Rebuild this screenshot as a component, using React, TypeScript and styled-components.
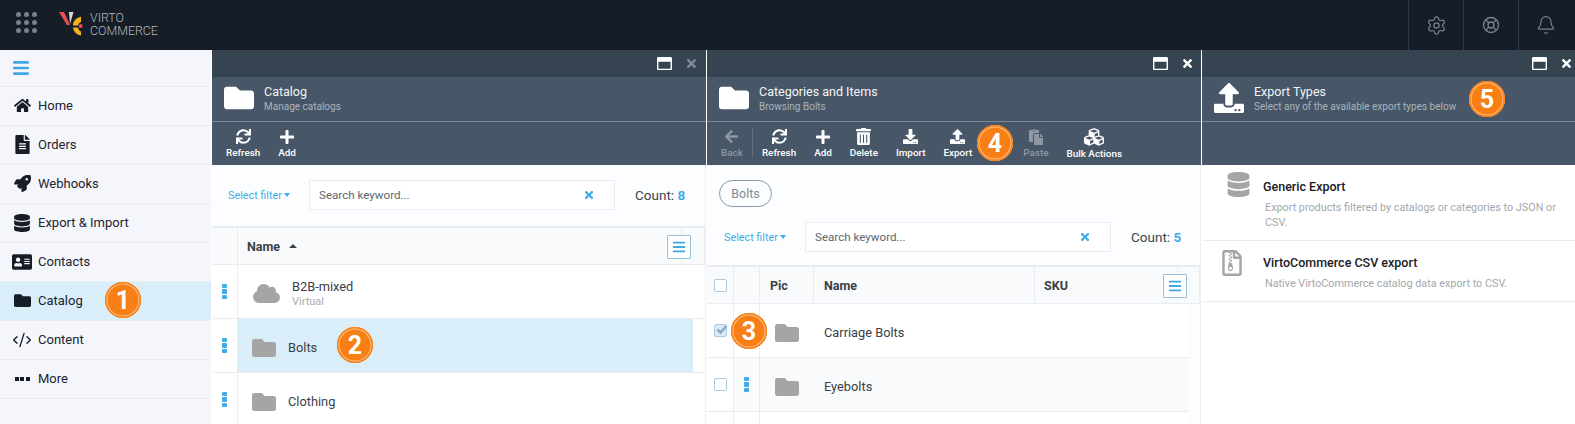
import React from 'react'
import styled, { createGlobalStyle } from 'styled-components'
import {
  FaAddressCard,
  FaArrowLeft,
  FaBars,
  FaCloud,
  FaCubes,
  FaDatabase,
  FaDownload,
  FaFileAlt,
  FaFolder,
  FaHome,
  FaPaste,
  FaPlus,
  FaRegFileArchive,
  FaRegWindowMaximize,
  FaRocket,
  FaSync,
  FaTimes,
  FaTrashAlt,
  FaUpload,
} from 'react-icons/fa'
import { Bell, CodeXml, LifeBuoy, Settings } from 'lucide-react'

const GlobalStyle = createGlobalStyle`
  html, body {
    margin: 0;
    padding: 0;
    background: #fff;
    overflow: hidden;
  }
  * {
    box-sizing: border-box;
  }
`

const Page = styled.div`
  position: relative;
  width: 1575px;
  height: 424px;
  overflow: hidden;
  font-family: Roboto, 'Liberation Sans', sans-serif;
  display: flex;
  flex-direction: column;
`

const TopBar = styled.header`
  height: 50px;
  flex: none;
  background: #161d27;
  display: flex;
  align-items: stretch;
  padding-right: 2px;
`

const Launcher = styled.div`
  width: 59px;
  padding: 12px 0 0 16px;
  display: grid;
  grid-template-columns: repeat(3, 5px);
  grid-auto-rows: 5px;
  gap: 3px;
`

const LauncherDot = styled.span`
  border-radius: 50%;
  background: #7b838d;
`

const Logo = styled.div`
  flex: 1;
  display: flex;
  align-items: center;
  gap: 7px;
  & svg {
    margin-top: -3px;
  }
`

const LogoText = styled.div`
  font-size: 12.4px;
  font-weight: 300;
  line-height: 12.5px;
  color: #b4b9bf;
  margin-top: -1px;
`

const TopAction = styled.div`
  width: 55px;
  border-left: 1px solid #2d3a4b;
  display: flex;
  align-items: center;
  justify-content: center;
  color: #76828f;
`

const Body = styled.div`
  flex: 1;
  display: flex;
  min-height: 0;
`

const Sidebar = styled.nav`
  width: 211px;
  flex: none;
  background: #f4f6fb;
`

const MenuToggle = styled.div`
  height: 37px;
  padding-left: 12px;
  display: flex;
  align-items: center;
  color: #3ea8e2;
  border-bottom: 1px solid #e9ecf2;
`

const NavItem = styled.div<{ $active?: boolean }>`
  height: 39px;
  padding: 0 0 1px 12px;
  display: flex;
  align-items: center;
  gap: 6px;
  font-size: 13px;
  color: #1b2430;
  background: ${({ $active }) => ($active ? '#d9eef9' : 'transparent')};
  border-bottom: 1px solid #e9ecf2;
`

const NavIcon = styled.span`
  width: 20px;
  display: flex;
  justify-content: center;
  color: #161d27;
`

const MoreDots = styled.span`
  display: flex;
  gap: 1.5px;
  & i {
    width: 4px;
    height: 4px;
    background: #161d27;
  }
`

const Blade = styled.section<{ $width: number }>`
  position: relative;
  width: ${({ $width }) => $width}px;
  flex: none;
  border-left: 1px solid #fff;
  background: #fff;
  display: flex;
  flex-direction: column;
`

const BladeTop = styled.div<{ $right: number }>`
  height: 27px;
  background: #364452;
  display: flex;
  align-items: center;
  justify-content: flex-end;
  gap: 13px;
  padding-right: ${({ $right }) => $right}px;
`

const WindowIcon = styled.span<{ $muted?: boolean }>`
  display: flex;
  color: ${({ $muted }) => ($muted ? '#7f8b97' : '#fff')};
`

const BladeHead = styled.div`
  height: 45px;
  background: #475768;
  border-bottom: 1px solid #7d8a97;
  padding: 0 0 2px 12px;
  display: flex;
  align-items: center;
  gap: 10px;
`

const HeadIcon = styled.span`
  display: flex;
  width: 30px;
  justify-content: center;
  color: #fff;
`

const HeadTitle = styled.div`
  font-size: 12.5px;
  line-height: 16px;
  color: #f3f5f7;
`

const HeadSub = styled.div`
  font-size: 10px;
  line-height: 13px;
  color: #aab3bc;
`

const Toolbar = styled.div`
  height: 43px;
  background: #475768;
  padding: 0 0 0 14px;
  display: flex;
  align-items: flex-start;
  gap: 18px;
`

const ToolButton = styled.div<{ $disabled?: boolean }>`
  display: flex;
  flex-direction: column;
  align-items: center;
  padding-top: 6px;
  height: 37px;
  font-size: 9.9px;
  font-weight: 500;
  line-height: 13px;
  color: ${({ $disabled }) => ($disabled ? '#8e98a3' : '#fff')};
`

const ToolIcon = styled.span`
  height: 18px;
  margin-bottom: 1px;
  display: flex;
  align-items: center;
`

const ToolDivider = styled.span`
  width: 1px;
  height: 30px;
  margin: 6px -9px 0 -9px;
  background: #5f6d7c;
`

const ToolSpacer = styled.span`
  width: 15px;
`

const BladeBody = styled.div`
  flex: 1;
  min-height: 0;
  background: #fcfdfe;
  border-right: 1px solid #eceff4;
`

const Breadcrumb = styled.div`
  padding: 15px 0 0 12px;
  height: 42px;
`

const Pill = styled.span`
  display: inline-flex;
  align-items: center;
  justify-content: center;
  width: 53px;
  height: 27px;
  border: 1px solid #8a97a6;
  border-radius: 14px;
  font-size: 12.5px;
  color: #7f8b98;
`

const FilterRow = styled.div<{ $height: number; $shift: number }>`
  height: ${({ $height }) => $height}px;
  padding: ${({ $shift }) => ($shift > 0 ? `${$shift}px 0 0 17px` : `0 0 ${-$shift}px 16px`)};
  display: flex;
  align-items: center;
`

const SelectFilter = styled.span`
  width: 81px;
  flex: none;
  font-size: 10.8px;
  color: #41ade8;
  display: flex;
  align-items: center;
  gap: 2px;
  &::after {
    content: '';
    border: 3.5px solid transparent;
    border-top: 4px solid #41ade8;
    border-bottom: 0;
  }
`

const SearchBox = styled.div`
  width: 306px;
  height: 30px;
  background: #fff;
  border: 1px solid #e9ecf2;
  padding: 0 19px 0 9px;
  display: flex;
  align-items: center;
  justify-content: space-between;
  font-size: 11.6px;
  color: #5e656d;
  & svg {
    color: #41ade8;
  }
`

const Count = styled.div`
  margin-left: 20px;
  font-size: 13.5px;
  color: #3d444c;
  & b {
    font-weight: 700;
    color: #41ade8;
  }
`

const TableFrame = styled.div`
  border-top: 2px solid #e9ecf2;
`

const TableRow = styled.div<{ $height: number; $columns: string; $inset?: number; $bg?: string }>`
  height: ${({ $height }) => $height}px;
  margin-right: ${({ $inset }) => $inset ?? 0}px;
  display: grid;
  grid-template-columns: ${({ $columns }) => $columns};
  background: ${({ $bg }) => $bg ?? '#fff'};
  border-bottom: 1px solid #e9ecf2;
`

const Cell = styled.div<{ $bg?: string; $center?: boolean }>`
  display: flex;
  align-items: center;
  justify-content: ${({ $center }) => ($center ? 'center' : 'flex-start')};
  background: ${({ $bg }) => $bg ?? 'transparent'};
  border-right: 1px solid #e9ecf2;
  min-width: 0;
`

const BodyCell = styled.div<{ $pad?: number; $selected?: boolean }>`
  display: flex;
  align-items: center;
  min-width: 0;
  padding: 4px 0 0 ${({ $pad }) => $pad ?? 0}px;
  margin-right: ${({ $selected }) => ($selected ? 12 : 0)}px;
  background: ${({ $selected }) => ($selected ? '#d9eef9' : 'transparent')};
  font-size: 12.8px;
  color: #3a4048;
`

const HeadCell = styled(Cell)<{ $pad?: number }>`
  position: relative;
  padding-left: ${({ $pad }) => $pad ?? 0}px;
  gap: 9px;
  font-size: 12.5px;
  font-weight: 700;
  color: #3a4048;
`

const SortCaret = styled.span`
  border: 4px solid transparent;
  border-bottom: 4px solid #3a4048;
  border-top: 0;
`

const ColumnMenu = styled.span`
  position: absolute;
  right: -10px;
  top: 7px;
  width: 24px;
  height: 24px;
  background: #fff;
  border: 1px solid #93c1dc;
  border-radius: 1px;
  display: flex;
  align-items: center;
  justify-content: center;
  color: #3ea8e2;
`

const Grip = styled.span`
  display: flex;
  flex-direction: column;
  gap: 1px;
  & i {
    width: 5px;
    height: 4.5px;
    border-radius: 1px;
    background: #41ade8;
  }
`

const RowIcon = styled.span<{ $left: number }>`
  display: flex;
  margin-left: ${({ $left }) => $left}px;
  color: #a5a5a5;
`

const RowText = styled.div`
  margin-left: 12px;
`

const RowSub = styled.div`
  margin-top: 1px;
  font-size: 11px;
  color: #a8adb3;
`

const Checkbox = styled.span<{ $checked?: boolean }>`
  position: relative;
  width: 13px;
  height: 13px;
  border: 1px solid #a8cbe0;
  border-radius: 2px;
  background: ${({ $checked }) => ($checked ? '#dde9f2' : '#fff')};
  color: #7fa9c6;
  & svg {
    position: absolute;
    left: 0;
    top: -2px;
  }
`

const TypeItem = styled.div<{ $height: number }>`
  height: ${({ $height }) => $height}px;
  display: grid;
  grid-template-columns: 61px 1fr;
  border-bottom: 1px solid #e9ecf2;
  background: #fff;
`

const TypeIcon = styled.div<{ $left: number; $top: number }>`
  padding: ${({ $top }) => $top}px 0 0 ${({ $left }) => $left}px;
  color: #a5a5a5;
`

const TypeText = styled.div`
  padding: 14px 16px 0 0;
`

const TypeTitle = styled.div`
  font-size: 12.5px;
  font-weight: 500;
  line-height: 16px;
  color: #1b2026;
`

const TypeDesc = styled.div`
  margin: 5px 0 0 2px;
  font-size: 10.8px;
  line-height: 15px;
  color: #a3a7ac;
`

const Badge = styled.div<{ $left: number; $top: number }>`
  position: absolute;
  left: ${({ $left }) => $left}px;
  top: ${({ $top }) => $top}px;
  width: 36px;
  height: 36px;
  border-radius: 50%;
  background: #f77f14;
  box-shadow: inset 0 0 0 1.5px #f77f14, inset 0 0 0 2.5px #fcc08a;
  display: flex;
  align-items: center;
  justify-content: center;
  font-size: 25px;
  font-weight: 700;
  color: #fff;
`

const navItems = [
  { label: 'Home', icon: <FaHome size={17} /> },
  { label: 'Orders', icon: <FaFileAlt size={19} /> },
  { label: 'Webhooks', icon: <FaRocket size={17} /> },
  { label: 'Export & Import', icon: <FaDatabase size={18} /> },
  { label: 'Contacts', icon: <FaAddressCard size={20} /> },
  { label: 'Catalog', icon: <FaFolder size={17} />, active: true },
  { label: 'Content', icon: <CodeXml size={20} strokeWidth={1.6} /> },
  {
    label: 'More',
    icon: (
      <MoreDots>
        <i />
        <i />
        <i />
      </MoreDots>
    ),
  },
]

const catalogColumns = '26px 1fr'
const catalogHeadColumns = '26px 444px 1fr'
const itemColumns = '27px 26px 54px 221px 1fr'
const itemHeadColumns = '27px 26px 54px 221px 143px 1fr'

function GripDots() {
  return (
    <Grip>
      <i />
      <i />
      <i />
    </Grip>
  )
}

function CheckMark() {
  return (
    <svg width="14" height="14" viewBox="0 0 14 14">
      <path d="M2.5 6.5l3 3 6-6.5" fill="none" stroke="currentColor" strokeWidth="2.4" />
    </svg>
  )
}

function WindowControls({ muted, right }: { muted?: boolean; right: number }) {
  return (
    <BladeTop $right={right}>
      <WindowIcon>
        <FaRegWindowMaximize size={15} />
      </WindowIcon>
      <WindowIcon $muted={muted}>
        <FaTimes size={13} />
      </WindowIcon>
    </BladeTop>
  )
}

function Head({ icon, title, sub }: { icon: React.ReactNode; title: string; sub: string }) {
  return (
    <BladeHead>
      <HeadIcon>{icon}</HeadIcon>
      <div>
        <HeadTitle>{title}</HeadTitle>
        <HeadSub>{sub}</HeadSub>
      </div>
    </BladeHead>
  )
}

function Tool({ icon, label, disabled }: { icon: React.ReactNode; label: string; disabled?: boolean }) {
  return (
    <ToolButton $disabled={disabled}>
      <ToolIcon>{icon}</ToolIcon>
      <span>{label}</span>
    </ToolButton>
  )
}

function Filter({ count, height, shift }: { count: number; height: number; shift: number }) {
  return (
    <FilterRow $height={height} $shift={shift}>
      <SelectFilter>Select filter</SelectFilter>
      <SearchBox>
        Search keyword...
        <FaTimes size={12} />
      </SearchBox>
      <Count>
        Count: <b>{count}</b>
      </Count>
    </FilterRow>
  )
}

function Logomark() {
  return (
    <svg width="24" height="26" viewBox="0 0 24 26">
      <path d="M0 1h5l6 13-3 0z" fill="#ef4b52" />
      <path d="M10 1h4.500l-3.500 12z" fill="#d9d9d9" />
      <path d="M22 5.500C17 7 14 10 14 14.500h5c.5-2 1.500-3 3-3.500z" fill="#f5b31a" />
      <path d="M14 16.500h5c.5 2.500 1.500 3.500 3 4v4c-5-1-7.500-4-8-8z" fill="#f5b31a" />
      <circle cx="21.700" cy="15" r="2" fill="#ef4b52" />
    </svg>
  )
}

export default function App() {
  return (
    <Page>
      <GlobalStyle />
      <TopBar>
        <Launcher>
          {Array.from({ length: 9 }).map((_, i) => (
            <LauncherDot key={i} />
          ))}
        </Launcher>
        <Logo>
          <Logomark />
          <LogoText>
            VIRTO
            <br />
            COMMERCE
          </LogoText>
        </Logo>
        <TopAction>
          <Settings size={21} strokeWidth={1.4} />
        </TopAction>
        <TopAction>
          <LifeBuoy size={18} strokeWidth={1.8} />
        </TopAction>
        <TopAction>
          <Bell size={20} strokeWidth={1.4} />
        </TopAction>
      </TopBar>

      <Body>
        <Sidebar>
          <MenuToggle>
            <FaBars size={18} />
          </MenuToggle>
          {navItems.map((item) => (
            <NavItem key={item.label} $active={item.active}>
              <NavIcon>{item.icon}</NavIcon>
              {item.label}
            </NavItem>
          ))}
        </Sidebar>

        <Blade $width={495}>
          <WindowControls muted right={8} />
          <Head icon={<FaFolder size={30} />} title="Catalog" sub="Manage catalogs" />
          <Toolbar>
            <Tool icon={<FaSync size={15} />} label="Refresh" />
            <Tool icon={<FaPlus size={16} />} label="Add" />
          </Toolbar>
          <BladeBody>
            <Filter count={8} height={61} shift={-1} />
            <TableFrame>
              <TableRow $height={37} $columns={catalogHeadColumns} $bg="#f9fafb">
                <Cell />
                <HeadCell $pad={9}>
                  Name <SortCaret />
                  <ColumnMenu>
                    <FaBars size={14} />
                  </ColumnMenu>
                </HeadCell>
                <Cell />
              </TableRow>
              <TableRow $height={54} $columns={catalogColumns}>
                <Cell $center>
                  <GripDots />
                </Cell>
                <BodyCell>
                  <RowIcon $left={15}>
                    <FaCloud size={27} />
                  </RowIcon>
                  <RowText>
                    B2B-mixed
                    <RowSub>Virtual</RowSub>
                  </RowText>
                </BodyCell>
              </TableRow>
              <TableRow $height={54} $columns={catalogColumns}>
                <Cell $center>
                  <GripDots />
                </Cell>
                <BodyCell $selected>
                  <RowIcon $left={14}>
                    <FaFolder size={24} />
                  </RowIcon>
                  <RowText>Bolts</RowText>
                </BodyCell>
              </TableRow>
              <TableRow $height={54} $columns={catalogColumns}>
                <Cell $center>
                  <GripDots />
                </Cell>
                <BodyCell>
                  <RowIcon $left={14}>
                    <FaFolder size={24} />
                  </RowIcon>
                  <RowText>Clothing</RowText>
                </BodyCell>
              </TableRow>
            </TableFrame>
          </BladeBody>
        </Blade>

        <Blade $width={495}>
          <WindowControls right={7} />
          <Head icon={<FaFolder size={30} />} title="Categories and Items" sub="Browsing Bolts" />
          <Toolbar>
            <Tool icon={<FaArrowLeft size={15} />} label="Back" disabled />
            <ToolDivider />
            <Tool icon={<FaSync size={15} />} label="Refresh" />
            <Tool icon={<FaPlus size={16} />} label="Add" />
            <Tool icon={<FaTrashAlt size={17} />} label="Delete" />
            <Tool icon={<FaDownload size={15} />} label="Import" />
            <Tool icon={<FaUpload size={15} />} label="Export" />
            <ToolSpacer />
            <Tool icon={<FaPaste size={16} />} label="Paste" disabled />
            <Tool icon={<FaCubes size={20} />} label="Bulk Actions" />
          </Toolbar>
          <BladeBody>
            <Breadcrumb>
              <Pill>Bolts</Pill>
            </Breadcrumb>
            <Filter count={5} height={58} shift={2} />
            <TableFrame>
              <TableRow $height={37} $columns={itemHeadColumns} $bg="#f9fafb">
                <Cell $center>
                  <Checkbox />
                </Cell>
                <Cell />
                <HeadCell $pad={10}>Pic</HeadCell>
                <HeadCell $pad={10}>Name</HeadCell>
                <HeadCell $pad={9}>
                  SKU
                  <ColumnMenu>
                    <FaBars size={14} />
                  </ColumnMenu>
                </HeadCell>
                <Cell />
              </TableRow>
              <TableRow $height={54} $columns={itemColumns} $inset={11}>
                <Cell $center>
                  <Checkbox $checked>
                    <CheckMark />
                  </Checkbox>
                </Cell>
                <Cell />
                <BodyCell>
                  <RowIcon $left={15}>
                    <FaFolder size={24} />
                  </RowIcon>
                </BodyCell>
                <BodyCell $pad={10}>Carriage Bolts</BodyCell>
                <BodyCell />
              </TableRow>
              <TableRow $height={54} $columns={itemColumns} $inset={11} $bg="#f9fafb">
                <Cell $center $bg="#fff">
                  <Checkbox />
                </Cell>
                <Cell $center>
                  <GripDots />
                </Cell>
                <BodyCell>
                  <RowIcon $left={15}>
                    <FaFolder size={24} />
                  </RowIcon>
                </BodyCell>
                <BodyCell $pad={10}>Eyebolts</BodyCell>
                <BodyCell />
              </TableRow>
              <TableRow $height={30} $columns={itemColumns} $inset={11}>
                <Cell />
                <Cell />
                <BodyCell />
                <BodyCell />
                <BodyCell />
              </TableRow>
            </TableFrame>
          </BladeBody>
        </Blade>

        <Blade $width={374}>
          <WindowControls right={2} />
          <Head icon={<FaUpload size={30} />} title="Export Types" sub="Select any of the available export types below" />
          <Toolbar />
          <TypeItem $height={76}>
            <TypeIcon $left={24} $top={7}>
              <FaDatabase size={25} />
            </TypeIcon>
            <TypeText>
              <TypeTitle>Generic Export</TypeTitle>
              <TypeDesc>Export products filtered by catalogs or categories to JSON or CSV.</TypeDesc>
            </TypeText>
          </TypeItem>
          <TypeItem $height={61}>
            <TypeIcon $left={17} $top={9}>
              <FaRegFileArchive size={26} />
            </TypeIcon>
            <TypeText>
              <TypeTitle>VirtoCommerce CSV export</TypeTitle>
              <TypeDesc>Native VirtoCommerce catalog data export to CSV.</TypeDesc>
            </TypeText>
          </TypeItem>
        </Blade>
      </Body>

      <Badge $left={105} $top={282}>1</Badge>
      <Badge $left={337} $top={327}>2</Badge>
      <Badge $left={731} $top={313}>3</Badge>
      <Badge $left={977} $top={125}>4</Badge>
      <Badge $left={1469} $top={81}>5</Badge>
    </Page>
  )
}
